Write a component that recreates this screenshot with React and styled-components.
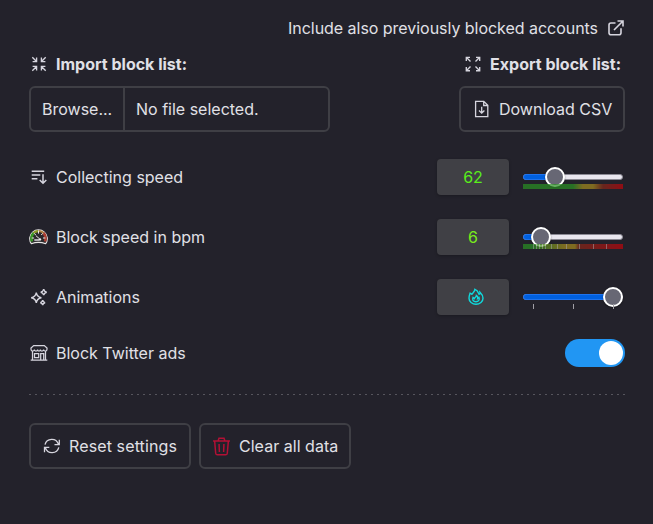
import React from "react";
import styled, { createGlobalStyle } from "styled-components";

const GlobalStyle = createGlobalStyle`
  * { box-sizing: border-box; }
  body {
    margin: 0;
    background: #23222b;
    color: #e0e0e6;
    font: 16px/20px Inter, sans-serif;
  }
`;

const Page = styled.main`
  width: 653px;
  height: 524px;
  padding: 18px 28px 0 29px;
  background: #23222b;
  overflow: hidden;
`;

const TopLink = styled.div`
  display: flex;
  justify-content: flex-end;
  align-items: center;
  gap: 9px;
  height: 20px;
  letter-spacing: -0.035px;
`;

const Headings = styled.div`
  display: flex;
  justify-content: space-between;
  height: 20px;
  margin-top: 16px;
  padding-right: 4px;
  font-weight: 700;
`;

const Label = styled.div`
  display: flex;
  align-items: center;
  gap: 8px;
  white-space: nowrap;
`;

const IconSlot = styled.span`
  display: flex;
  align-items: center;
  justify-content: center;
  width: 19px;
  height: 20px;
  flex: none;
`;

const Files = styled.div`
  display: flex;
  justify-content: space-between;
  margin-top: 12px;
`;

const FilePicker = styled.div`
  display: flex;
  width: 301px;
  height: 46px;
  border: 2px solid #3f3f45;
  border-radius: 6px;
  line-height: 42px;
`;

const Browse = styled.span`
  width: 94px;
  padding-left: 11px;
  border-right: 2px solid #3f3f45;
`;

const FileName = styled.span`
  padding-left: 11px;
`;

const Button = styled.button`
  display: flex;
  align-items: center;
  gap: 8px;
  width: ${(p) => p.$width}px;
  height: 46px;
  padding: 0 0 0 11px;
  border: 2px solid #3f3f45;
  border-radius: 6px;
  background: transparent;
  color: inherit;
  font: inherit;
  letter-spacing: ${(p) => p.$spacing || 0}px;
  white-space: nowrap;
`;

const Settings = styled.section`
  display: grid;
  gap: 24px;
  margin-top: 27px;
`;

const SettingRow = styled.div`
  display: grid;
  grid-template-columns: 1fr 72px 102px;
  column-gap: 14px;
  height: 36px;
  align-items: center;
`;

const ToggleRow = styled.div`
  display: flex;
  justify-content: space-between;
  align-items: center;
  height: 28px;
`;

const ValueBox = styled.div`
  display: flex;
  align-items: center;
  justify-content: center;
  height: 36px;
  padding-left: ${(p) => p.$inset || 0}px;
  border-radius: 4px;
  background: #404045;
  box-shadow: 0 1px 3px rgba(0, 0, 0, 0.25);
  color: ${(p) => p.$color};
`;

const Slider = styled.div`
  position: relative;
  width: 100px;
  height: 36px;
  padding-top: 15px;
`;

const Track = styled.div`
  height: 6px;
  border: 1px solid #8b8a94;
  border-radius: 3px;
  background: #e9e7ef;
`;

const Fill = styled.div`
  width: ${(p) => p.$value}px;
  height: 6px;
  margin: -1px;
  border: 1px solid #1f73ed;
  border-radius: 3px;
  background: #0060df;
`;

const Thumb = styled.div`
  position: absolute;
  top: 8px;
  left: ${(p) => p.$value - 10}px;
  width: 20px;
  height: 20px;
  border: 2px solid #fff;
  border-radius: 50%;
  background: #676774;
  box-shadow: 0 1px 2px rgba(0, 0, 0, 0.4);
`;

const Scale = styled.svg`
  position: absolute;
  top: 25px;
  left: 0;
`;

const Switch = styled.div`
  display: flex;
  justify-content: flex-end;
  width: 60px;
  height: 28px;
  padding: 2px;
  margin-right: 0;
  border-radius: 14px;
  background: #2196f3;
`;

const Knob = styled.div`
  width: 24px;
  height: 24px;
  border-radius: 50%;
  background: #fff;
`;

const Divider = styled.div`
  width: 597px;
  height: 1px;
  margin: 27px 0 28px;
  background: repeating-linear-gradient(90deg, #56555d 0 2px, transparent 2px 6px);
`;

const Actions = styled.div`
  display: flex;
  gap: 8px;
`;

const Icon = ({ size = 18, width = 1.3, color = "#d6d5de", children }) => (
  <svg width={size} height={size} viewBox="0 0 18 18" fill="none" stroke={color} strokeWidth={width}>
    {children}
  </svg>
);

const ImportIcon = () => (
  <Icon width={1.35}>
    <path d="M2.3 2.3l4 4M2.6 6.6h4v-4M15.7 2.3l-4 4M11.4 2.6v4h4M2.3 15.7l4-4M2.6 11.4h4v4M15.7 15.7l-4-4M15.4 11.4h-4v4" />
  </Icon>
);

const ExportIcon = () => (
  <Icon width={1.35}>
    <path d="M2.3 2.3l4.2 4.2M2.3 6V2.3H6M15.7 2.3l-4.2 4.2M12 2.3h3.7V6M2.3 15.7l4.2-4.2M2.3 12v3.7H6M15.7 15.7l-4.2-4.2M12 15.7h3.7V12" />
  </Icon>
);

const ExternalIcon = () => (
  <Icon width={1.6}>
    <path d="M8.5 4H4C2.8 4 2 4.7 2 6v7.7c0 1.3.7 2 2 2h8c1.3 0 2-.7 2-2V9.2M10.5 2H16v5.5M16 2L7 11" />
  </Icon>
);

const DownloadIcon = () => (
  <Icon>
    <path d="M2.6 1.3h8.2l4 4v11.4H2.6zM10.7 1.5v4h4M8.7 6.8v6.4M6 10.5l2.7 2.7 2.7-2.7" />
  </Icon>
);

const SortIcon = () => (
  <Icon width={1.5}>
    <path d="M1.7 3.2h12.5M1.7 7h8.6M1.7 10.8h5.7M13 6.3v9M9.7 12l3.3 3.3 3.3-3.3" />
  </Icon>
);

const GaugeIcon = () => (
  <svg width="19" height="18" viewBox="0 0 19 18" fill="none">
    <path d="M2.3 15.7A8.8 8.8 0 1 1 16.7 15.7Q9.5 13 2.3 15.7Z" fill="#2b292d" stroke="#e7e5e4" strokeWidth="1.1" />
    <path d="M2.9 13.5Q1.6 8 4.7 5" stroke="#369522" strokeWidth="2.6" />
    <path d="M4.7 5Q6.7 3 9.2 3.1" stroke="#8b9b28" strokeWidth="2.3" />
    <path d="M10 3.1Q13 3.4 14.5 5" stroke="#ae8243" strokeWidth="2" />
    <path d="M14.5 5Q17.4 8 16.1 13.5" stroke="#a93c30" strokeWidth="2.6" />
    <path d="M9.5 2.6v3M5 5.2l1.8 1.8M14 5.2L12.2 7M2.7 10h2.4M14 10h2.4M10.5 10.8L6.8 7.6" stroke="#ebe8e6" strokeWidth="1" />
    <path d="M5.3 12h5" stroke="#c8c6cb" strokeWidth="1.7" />
    <circle cx="11" cy="11.4" r="1.2" fill="#eee" />
  </svg>
);

const SparklesIcon = () => (
  <Icon width={1.4}>
    <path d="M6.3 4.7Q7 9 11.4 9.7Q7 10.4 6.3 14.8Q5.6 10.4 1.2 9.7Q5.6 9 6.3 4.7ZM13.7 1.2Q14.2 3.7 16.7 4.2Q14.2 4.7 13.7 7.2Q13.2 4.7 10.7 4.2Q13.2 3.7 13.7 1.2ZM12.7 12.2Q13.1 14.3 15.1 14.7Q13.1 15.1 12.7 17.1Q12.3 15.1 10.3 14.7Q12.3 14.3 12.7 12.2Z" />
  </Icon>
);

const ShopIcon = () => (
  <Icon width={1.25}>
    <path d="M2.5 7v9.2M15.5 7v9.2M.7 16.2h16.6M3.7 1.5h10.6L17 4v1.2c0 2.4-3.1 2.4-3.4.3 0 2-3.2 2-3.2 0 0 2-2.8 2-2.8 0 0 2-3.2 2-3.2 0C4.1 7.6 1 7.6 1 5.2V4zM10.7 16.1V9.7h3v6.4M4.5 9.7h4.2v4H4.5z" />
  </Icon>
);

const FlameIcon = () => (
  <Icon color="#10d9dc" width={1.4}>
    <path d="M5 6.7C5.2 4.7 7.8 4 7.9 1.4C11.3 2.8 11.2 5 12.1 6.4Q13.3 5.9 13 4.3C15.2 6.5 16 8.2 16 10.2A7 6.1 0 0 1 2 10.2C2 8 2.8 6.6 3.1 5.2Q4.6 5.7 5 6.7Z" />
    <path d="M9.4 7.4C9.4 9 7.8 9.2 7.4 10.5L6 9.4C5 12 6.3 13.7 8.9 13.7S13 11.8 12 9.4L10.7 10.5C11 9 10.4 8 9.4 7.4Z" />
  </Icon>
);

const RefreshIcon = () => (
  <Icon>
    <path d="M2 7.6A7 7 0 0 1 15.4 7M16.3 2.8v4.8h-4.8M15.8 10.4A7 7 0 0 1 2.4 11M1.5 15.2v-4.8h4.8" />
  </Icon>
);

const TrashIcon = () => (
  <Icon color="#b41035" size={19} width={1.4}>
    <path d="M1 3.7h16M5.8 3.5l.8-2.3h4.8l.8 2.3M2.5 3.8l1 11.6c.1 1 .8 1.5 1.7 1.5h7.6c.9 0 1.6-.5 1.7-1.5l1-11.6M6.7 6.6l.3 7.6M11.3 6.6l-.3 7.6" />
  </Icon>
);

const Range = ({ value, children }) => (
  <Slider>
    <Track><Fill $value={value} /></Track>
    <Thumb $value={value} />
    {children}
  </Slider>
);

const CollectingScale = () => (
  <Scale width="100" height="5" opacity="0.7">
    <defs>
      <linearGradient id="collecting">
        <stop offset="0.5" stopColor="#2a9023" />
        <stop offset="0.6" stopColor="#a58b1d" />
        <stop offset="0.7" stopColor="#a58b1d" />
        <stop offset="0.8" stopColor="#842819" />
        <stop offset="1" stopColor="#bf050c" />
      </linearGradient>
    </defs>
    <rect width="100" height="5" fill="url(#collecting)" />
  </Scale>
);

const BlockScale = () => (
  <Scale width="100" height="5" opacity="0.7">
    <defs>
      <linearGradient id="blocking">
        <stop offset="0.1" stopColor="#2a9023" />
        <stop offset="0.42" stopColor="#a58b1d" />
        <stop offset="0.52" stopColor="#a58b1d" />
        <stop offset="0.56" stopColor="#842819" />
        <stop offset="1" stopColor="#bf050c" />
      </linearGradient>
    </defs>
    <rect width="100" height="5" fill="url(#blocking)" />
    <path d="M10.5 0v5M13.5 0v5M16.5 0v5M19.5 0v5M22.5 0v5M28.5 0v5M34.5 0v5M43.5 0v5M56.5 0v5M70.5 0v5M83.5 0v5" stroke="#ddd" strokeOpacity=".55" />
  </Scale>
);

const StepScale = () => (
  <Scale width="100" height="5">
    <path d="M10.5 0v5M50.5 0v5M90.5 0v5" stroke="#a09fa6" />
  </Scale>
);

const Setting = ({ icon, label, value, color, inset, slider, children }) => (
  <SettingRow>
    <Label><IconSlot>{icon}</IconSlot>{label}</Label>
    <ValueBox $color={color} $inset={inset}>{value}</ValueBox>
    <Range value={slider}>{children}</Range>
  </SettingRow>
);

export default function App() {
  return (
    <>
      <GlobalStyle />
      <Page>
        <TopLink>Include also previously blocked accounts<ExternalIcon /></TopLink>
        <Headings>
          <Label><IconSlot><ImportIcon /></IconSlot>Import block list:</Label>
          <Label><IconSlot><ExportIcon /></IconSlot>Export block list:</Label>
        </Headings>
        <Files>
          <FilePicker><Browse>Browse...</Browse><FileName>No file selected.</FileName></FilePicker>
          <Button $width={166}><IconSlot><DownloadIcon /></IconSlot>Download CSV</Button>
        </Files>
        <Settings>
          <Setting icon={<SortIcon />} label="Collecting speed" value="62" color="#59ee1b" slider={32}><CollectingScale /></Setting>
          <Setting icon={<GaugeIcon />} label="Block speed in bpm" value="6" color="#79ed1b" slider={18}><BlockScale /></Setting>
          <Setting icon={<SparklesIcon />} label="Animations" value={<FlameIcon />} inset={5} slider={90}><StepScale /></Setting>
          <ToggleRow>
            <Label><IconSlot><ShopIcon /></IconSlot>Block Twitter ads</Label>
            <Switch><Knob /></Switch>
          </ToggleRow>
        </Settings>
        <Divider />
        <Actions>
          <Button $width={162} $spacing={0.12}><IconSlot><RefreshIcon /></IconSlot>Reset settings</Button>
          <Button $width={152} $spacing={0.03}><IconSlot><TrashIcon /></IconSlot>Clear all data</Button>
        </Actions>
      </Page>
    </>
  );
}
